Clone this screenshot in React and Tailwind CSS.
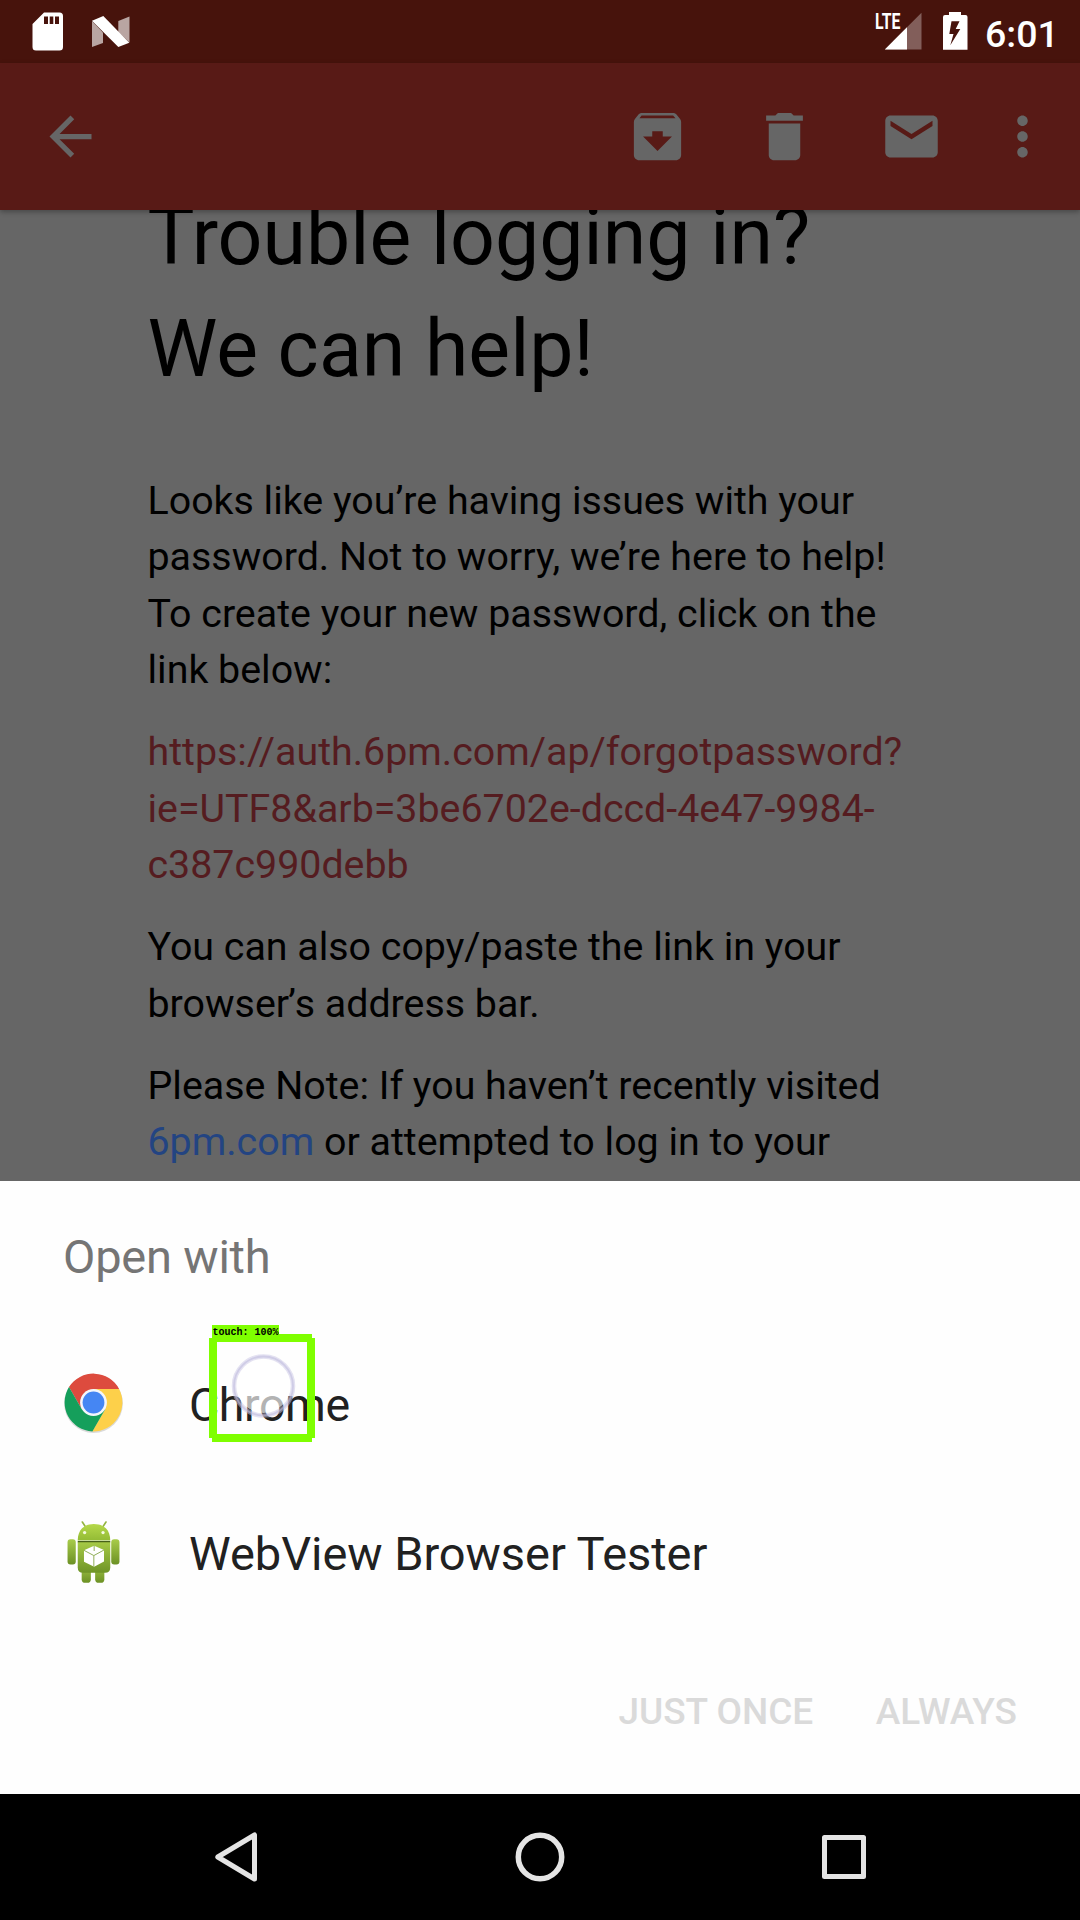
import React from "react";

function SdCardIcon() {
  return (
    <svg width="32" height="40" viewBox="0 0 32 40" fill="#fff">
      <path
        fillRule="evenodd"
        d="M12 .5H27.5a3.5 3.5 0 0 1 3.5 3.5V35a3.5 3.5 0 0 1-3.5 3.5H4A3.5 3.5 0 0 1 .5 35V12zM12 4.5V12h4V4.5zM17.7 4.5V12h3.6V4.5zM23 4.5V12h4V4.5z"
      />
    </svg>
  );
}

function NougatIcon() {
  return (
    <svg width="38" height="32" viewBox="0 0 38 32" fill="#fff">
      <path d="M0 5L11 16.5V27L0 31z" opacity=".62" />
      <path d="M26.3 5L37.5 .5V26.5L26.3 16z" opacity=".62" />
      <path d="M0 4.8L11.3 0L37.3 26.7L26.3 31z" />
    </svg>
  );
}

function SignalIcon() {
  return (
    <svg width="46" height="38" viewBox="0 0 46 38" className="overflow-visible">
      <path d="M45.5 .8V37.5H8.8z" fill="#fff" opacity=".32" />
      <path d="M31 15.3V37.5H8.8z" fill="#fff" />
      <text
        x="-1"
        y="17.4"
        fill="#fff"
        fontFamily="Roboto, sans-serif"
        fontWeight="700"
        fontSize="22.5"
        textLength="25.5"
        lengthAdjust="spacingAndGlyphs"
      >
        LTE
      </text>
    </svg>
  );
}

function BatteryIcon() {
  return (
    <svg width="25" height="38" viewBox="0 0 25 38" fill="#fff">
      <path
        fillRule="evenodd"
        d="M6 0H18V3H22.5Q24.5 3 24.5 5V37.8H0V5Q0 3 2 3H6zM8.5 9.3L6.3 22H10.5L7.3 33.3L17.3 17H12.7L16.5 9.3z"
      />
    </svg>
  );
}

function ToolIcon({ d }) {
  return (
    <svg className="size-[63px]" viewBox="0 0 24 24" fill="#666">
      <path d={d} />
    </svg>
  );
}

const TOOL_PATHS = {
  back: "M20 11H7.83l5.59-5.59L12 4l-8 8 8 8 1.41-1.41L7.83 13H20v-2z",
  archive:
    "M20.54 5.23l-1.39-1.68C18.88 3.21 18.47 3 18 3H6c-.47 0-.88.21-1.16.55L3.46 5.23C3.17 5.57 3 6.02 3 6.5V19c0 1.1.9 2 2 2h14c1.1 0 2-.9 2-2V6.5c0-.48-.17-.93-.46-1.27zM12 17.5L6.5 12H10v-2h4v2h3.5L12 17.5zM5.12 5l.81-1h12l.94 1H5.12z",
  remove:
    "M6 19c0 1.1.9 2 2 2h8c1.1 0 2-.9 2-2V7H6v12zM19 4h-3.5l-1-1h-5l-1 1H5v2h14V4z",
  mail: "M20 4H4c-1.1 0-1.99.9-1.99 2L2 18c0 1.1.9 2 2 2h16c1.1 0 2-.9 2-2V6c0-1.1-.9-2-2-2zm0 4l-8 5-8-5V6l8 5 8-5v2z",
  more: "M12 8c1.1 0 2-.9 2-2s-.9-2-2-2-2 .9-2 2 .9 2 2 2zm0 2c-1.1 0-2 .9-2 2s.9 2 2 2 2-.9 2-2-.9-2-2-2zm0 6c-1.1 0-2 .9-2 2s.9 2 2 2 2-.9 2-2-.9-2-2-2z",
};

function ChromeIcon() {
  return (
    <svg className="size-[63px]" viewBox="-31.5 -31.5 63 63">
      <circle cy="1" r="29.4" fill="#000" opacity=".14" />
      <path d="M-24.5-15.4A29 29 0 0 1 25.6-13.5H0V0L-11.7 6.75z" fill="#dd4b3e" />
      <path d="M25.6-13.5A29 29 0 0 1-1.1 28.9L11.7 6.75L0 0V-13.5z" fill="#fdd04a" />
      <path d="M-1.1 28.9A29 29 0 0 1-24.5-15.4L-11.7 6.75L0 0L11.7 6.75z" fill="#159f5b" />
      <circle r="13.4" fill="#f4f6fb" />
      <circle r="10.9" fill="#4586f3" />
    </svg>
  );
}

function AndroidIcon() {
  return (
    <svg width="70" height="80" viewBox="0 0 210 240" className="mx-[-3px] mb-[6px]">
      <defs>
        <linearGradient id="droidBody" x1="0" y1="0" x2="0" y2="1">
          <stop offset="0" stopColor="#a6ca45" />
          <stop offset="1" stopColor="#6f9427" />
        </linearGradient>
        <linearGradient id="droidLimb" x1="0" y1="0" x2="0" y2="1">
          <stop offset="0" stopColor="#a9cc4a" />
          <stop offset="1" stopColor="#6c9125" />
        </linearGradient>
        <linearGradient id="droidHead" x1="0" y1="0" x2="0" y2="1">
          <stop offset="0" stopColor="#b5d84a" />
          <stop offset="1" stopColor="#93bb35" />
        </linearGradient>
      </defs>
      <path d="M71 38L81 53M143 38L133 53" stroke="#93b440" strokeWidth="5" strokeLinecap="round" />
      <rect x="69" y="160" width="28" height="63" rx="11" fill="url(#droidLimb)" />
      <rect x="110" y="160" width="28" height="63" rx="11" fill="url(#droidLimb)" />
      <rect x="26" y="90" width="25" height="77" rx="9" fill="url(#droidLimb)" />
      <rect x="159" y="90" width="25" height="77" rx="9" fill="url(#droidLimb)" />
      <path d="M57 99H156V176Q156 192 140 192H73Q57 192 57 176z" fill="url(#droidBody)" />
      <path d="M57 94C57 62 76 44 106 44C137 44 156 62 156 94z" fill="url(#droidHead)" />
      <path d="M57 97.500H156" stroke="#47611a" strokeWidth="4" />
      <circle cx="78" cy="70" r="5" fill="#f4fae0" />
      <circle cx="134" cy="70" r="5" fill="#f4fae0" />
      <path d="M107 110L137 123V158L107 174L76 159V124z" fill="#fff" />
      <path d="M76 124L106 140L137 123M106 140V174M107 110V126" stroke="#8fae55" strokeWidth="3" fill="none" />
    </svg>
  );
}

function TouchMarker() {
  return (
    <div className="absolute left-[209px] top-[-3px] h-[117px] w-[106px]">
      <svg className="absolute inset-0" width="106" height="117" viewBox="0 0 106 117">
        <circle cx="54.500" cy="61" r="27" fill="#fff" opacity=".66" />
        <circle cx="54.500" cy="61" r="29.500" fill="none" stroke="#c9c5e6" strokeWidth="4.500" opacity=".5" />
        <circle cx="54.500" cy="61" r="29.500" fill="none" stroke="#bdb9dc" strokeWidth="1.800" opacity=".55" />
        <path
          d="M3 0H70V9H103V13H106V113H103V117H3V113H0V13H3zM8 17V109H98V17z"
          fill="#7fff00"
          fillRule="evenodd"
        />
      </svg>
      <span className="absolute left-[3.500px] top-[2px] whitespace-pre font-['Liberation_Mono',monospace] text-[10px] font-bold leading-[11px] text-black">
        touch: 100%
      </span>
    </div>
  );
}

function AppRow({ icon, label, labelClass, children }) {
  return (
    <div className="relative flex h-[149.500px] items-center gap-[64px] pl-[62px]">
      <div className="flex w-[63px] shrink-0 justify-center">{icon}</div>
      <span className={labelClass}>{label}</span>
      {children}
    </div>
  );
}

export default function App() {
  return (
    <div className="flex h-[1920px] w-[1080px] flex-col overflow-hidden bg-[#666] font-[Roboto,sans-serif]">
      <header className="flex h-[63px] shrink-0 items-start bg-[#47130c] pl-[32px] pr-[25px] pt-[12px]">
        <SdCardIcon />
        <div className="ml-[28px] mt-[4px]">
          <NougatIcon />
        </div>
        <div className="ml-auto">
          <SignalIcon />
        </div>
        <div className="ml-[21px]">
          <BatteryIcon />
        </div>
        <span className="ml-[17px] w-[70px] whitespace-nowrap text-[37.500px] font-medium leading-[44px] text-white">
          6:01
        </span>
      </header>

      <nav className="z-10 flex h-[147px] shrink-0 items-center bg-[#581a16] pb-[1px] pl-[39px] pr-[10px] shadow-[0_2px_5px_rgba(0,0,0,0.3)]">
        <ToolIcon d={TOOL_PATHS.back} />
        <div className="ml-auto flex w-[127px] justify-center">
          <ToolIcon d={TOOL_PATHS.archive} />
        </div>
        <div className="flex w-[127px] justify-center">
          <ToolIcon d={TOOL_PATHS.remove} />
        </div>
        <div className="flex w-[127px] justify-center">
          <ToolIcon d={TOOL_PATHS.mail} />
        </div>
        <div className="flex w-[95px] justify-center">
          <ToolIcon d={TOOL_PATHS.more} />
        </div>
      </nav>

      <main className="h-[971px] shrink-0 overflow-hidden pl-[147.500px] text-black">
        <h1 className="mt-[-29.500px] whitespace-nowrap text-[78.750px] leading-[112.500px] tracking-[0.05px]">
          Trouble logging in?
          <br />
          We can help!
        </h1>
        <div className="mt-[67.500px] flex flex-col gap-[26.250px] whitespace-nowrap text-[39.375px] leading-[56.250px]">
          <p>
            Looks like you’re having issues with your
            <br />
            password. Not to worry, we’re here to help!
            <br />
            To create your new password, click on the
            <br />
            link below:
          </p>
          <p className="text-[#551c20]">
            https://auth.6pm.com/ap/forgotpassword?
            <br />
            ie=UTF8&amp;arb=3be6702e-dccd-4e47-9984-
            <br />
            c387c990debb
          </p>
          <p>
            You can also copy/paste the link in your
            <br />
            browse<span className="tracking-[-1.300px]">r’</span>s address bar.
          </p>
          <p>
            Please Note: If you haven’t recently visited
            <br />
            <span className="text-[#234482]">6pm.com</span> or attempted to log in to your
          </p>
        </div>
      </main>

      <section className="flex h-[613px] shrink-0 flex-col bg-[#fefefe]">
        <h2 className="h-[147px] pl-[63px] pt-[44px] text-[47px] leading-[64px] tracking-[-0.2px] text-[#757575]">
          Open with
        </h2>
        <AppRow
          icon={<ChromeIcon />}
          label="Chrome"
          labelClass="mt-[4px] text-[46.500px] leading-[64px] tracking-[-0.4px] text-[#212121]"
        >
          <TouchMarker />
        </AppRow>
        <AppRow
          icon={<AndroidIcon />}
          label="WebView Browser Tester"
          labelClass="mt-[4px] text-[47px] leading-[64px] tracking-[-0.05px] text-[#212121]"
        />
        <div className="flex flex-1 items-center justify-end gap-[62.500px] pr-[63px] pt-[3px] text-[37px] font-medium leading-[48px] text-[#dadada]">
          <span>JUST ONCE</span>
          <span>ALWAYS</span>
        </div>
      </section>

      <footer className="flex h-[126px] shrink-0 items-center bg-black px-[84px]">
        <div className="flex w-[304px] justify-center">
          <svg width="46" height="54" viewBox="0 0 46 54" fill="none" stroke="#e4e4e4" strokeWidth="5" strokeLinejoin="round">
            <path d="M4.800 27L41.500 5V49z" />
          </svg>
        </div>
        <div className="flex w-[304px] justify-center">
          <svg width="54" height="54" viewBox="0 0 54 54" fill="none" stroke="#e4e4e4" strokeWidth="5.500">
            <circle cx="27" cy="27" r="21.700" />
          </svg>
        </div>
        <div className="flex w-[304px] justify-center">
          <svg width="54" height="54" viewBox="0 0 54 54" fill="none" stroke="#e4e4e4" strokeWidth="5" strokeLinejoin="round">
            <path d="M7.500 7.500H46.500V46.500H7.500z" />
          </svg>
        </div>
      </footer>
    </div>
  );
}
